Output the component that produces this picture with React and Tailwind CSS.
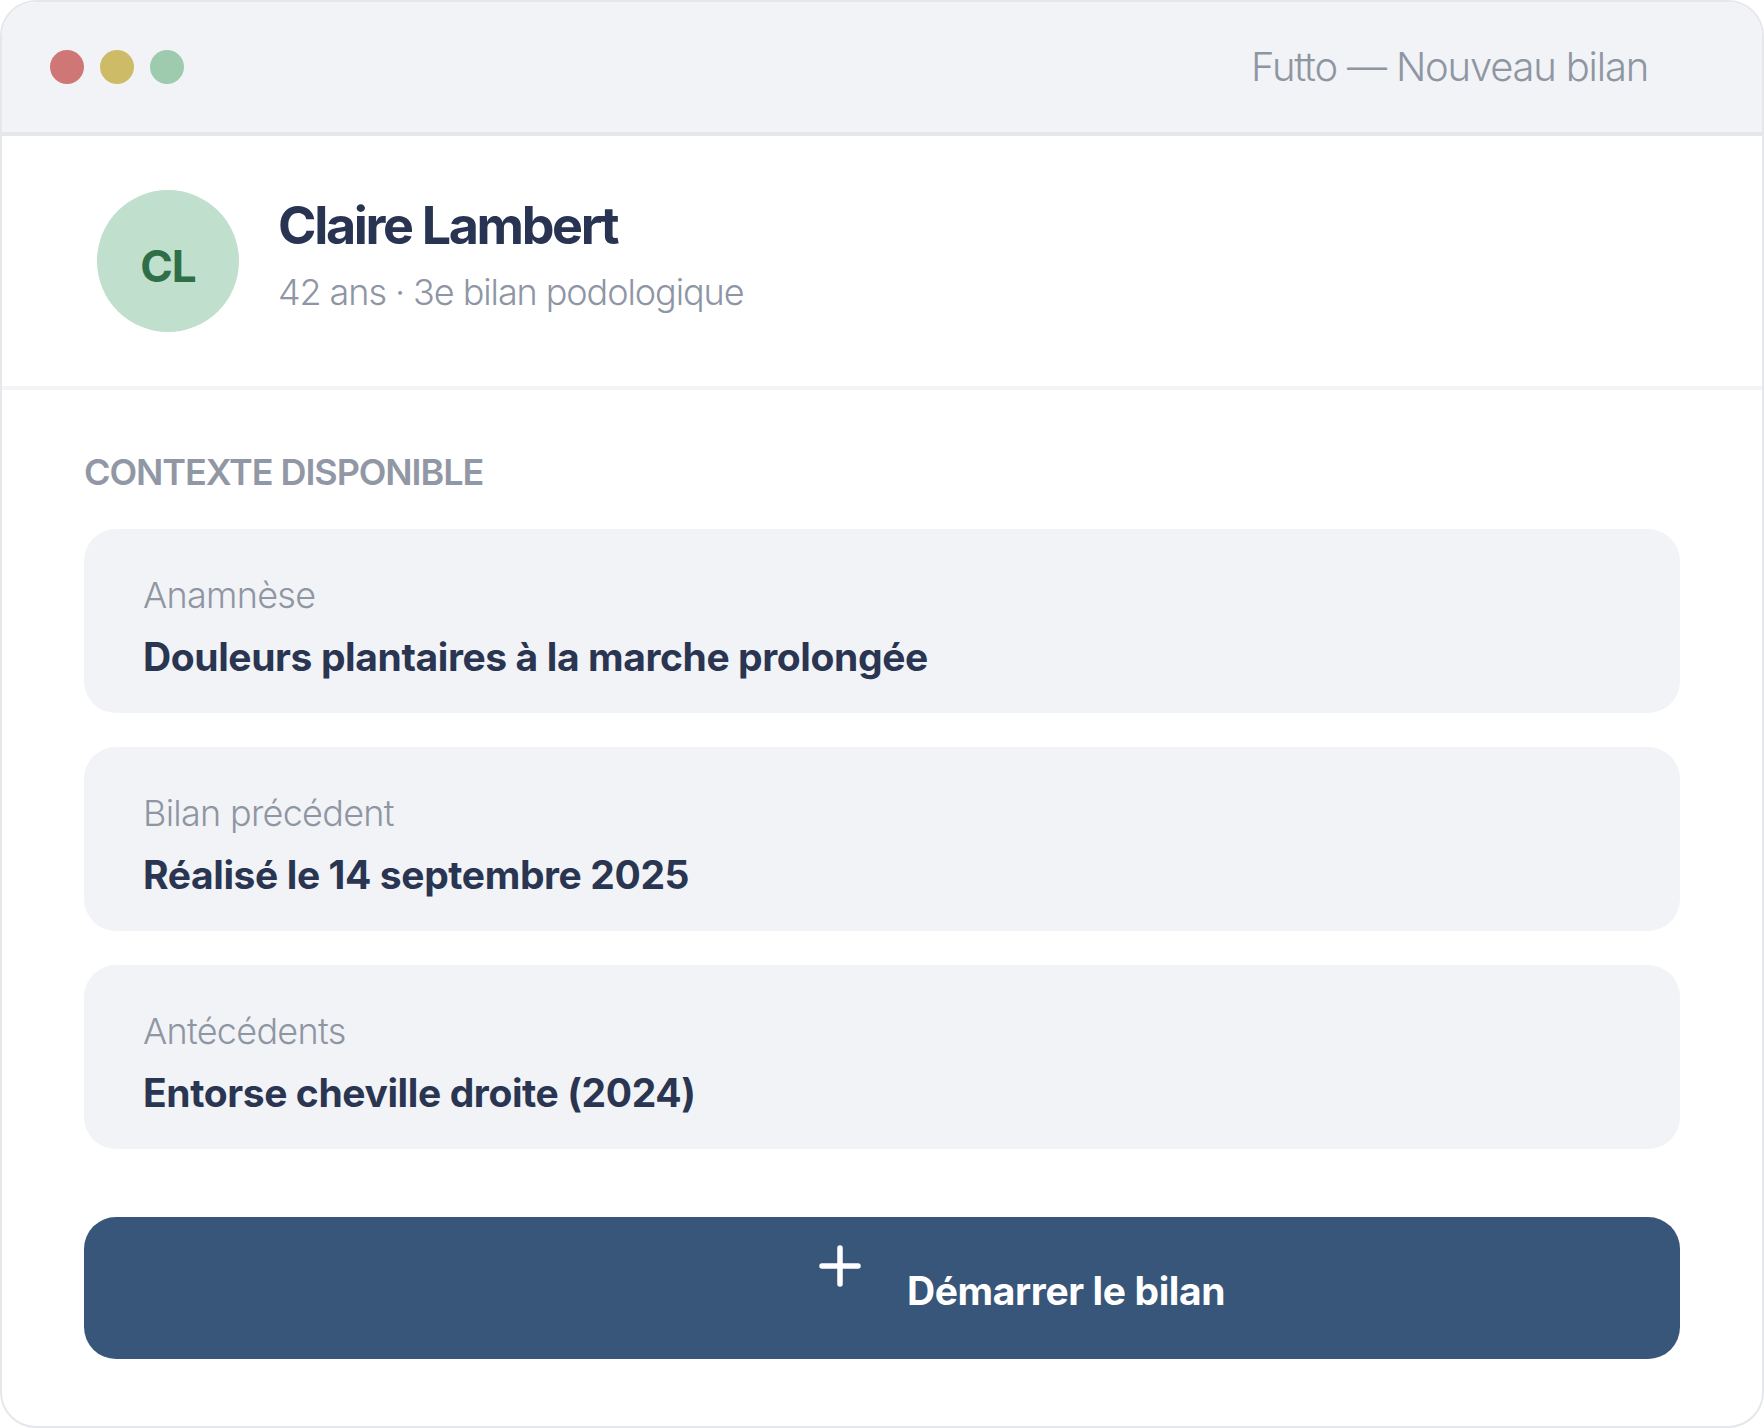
import React from "react";

const font = { fontFamily: "Inter, 'Noto Sans', sans-serif" };

function ContextCard({ label, value }) {
  return (
    <div className="flex flex-col gap-[16px] rounded-[32px] bg-[#f2f3f6] pl-[59px] pr-[40px] pt-[44px] pb-[33px]">
      <div className="text-[36px] leading-[45px] font-light tracking-[-0.02em] text-[#8f96a3]">
        {label}
      </div>
      <div className="text-[39px] leading-[46px] font-bold tracking-[-0.01em] text-[#2a3552]">
        {value}
      </div>
    </div>
  );
}

export default function App() {
  return (
    <div
      style={font}
      className="w-[1764px] h-[1428px] overflow-hidden rounded-[36px] border-2 border-[#e6e7ea] bg-white flex flex-col"
    >
      {/* Title bar */}
      <div className="h-[134px] shrink-0 flex items-center justify-between bg-[#f2f3f6] border-b-4 border-[#e6e7e9] pl-[48px] pr-[114px]">
        <div className="flex items-center gap-[16px]">
          <span className="w-[34px] h-[34px] rounded-full bg-[#cf7676]" />
          <span className="w-[34px] h-[34px] rounded-full bg-[#cdbb68]" />
          <span className="w-[34px] h-[34px] rounded-full bg-[#9ecbae]" />
        </div>
        <div className="text-[40px] font-light tracking-[-0.03em] text-[#8f96a3]">
          Futto — Nouveau bilan
        </div>
      </div>

      {/* Patient header */}
      <div className="h-[254px] shrink-0 flex items-center gap-[39px] pl-[95px] border-b-4 border-[#f3f4f6]">
        <div className="w-[142px] h-[142px] rounded-full bg-[#c0dfcc] flex items-center justify-center">
          <span className="mt-[10px] text-[44px] font-bold tracking-[-0.02em] text-[#2f6e47]">CL</span>
        </div>
        <div className="flex flex-col gap-[13px] pb-[13px]">
          <div className="text-[52px] leading-[62px] font-bold tracking-[-0.045em] text-[#283452]">
            Claire Lambert
          </div>
          <div className="text-[36px] leading-[44px] font-light tracking-[-0.03em] text-[#8e95a4]">
            42 ans · 3e bilan podologique
          </div>
        </div>
      </div>

      {/* Context */}
      <div className="flex flex-col px-[82px] pt-[60px]">
        <div className="text-[36px] leading-[45px] font-semibold uppercase tracking-[-0.03em] text-[#9197a4]">
          Contexte disponible
        </div>
        <div className="mt-[34px] flex flex-col gap-[34px]">
          <ContextCard label="Anamnèse" value="Douleurs plantaires à la marche prolongée" />
          <ContextCard label="Bilan précédent" value="Réalisé le 14 septembre 2025" />
          <ContextCard label="Antécédents" value="Entorse cheville droite (2024)" />
        </div>

        <button className="mt-[68px] h-[142px] w-full rounded-[32px] bg-[#38557a] flex items-center pl-[735px]">
          <svg
            width="42"
            height="42"
            viewBox="0 0 42 42"
            className="mb-[44px] shrink-0"
            fill="none"
            stroke="white"
            strokeWidth="5.5"
            strokeLinecap="round"
          >
            <path d="M21 3v36M3 21h36" />
          </svg>
          <span className="ml-[46px] mt-[6px] text-[39px] leading-[46px] font-bold tracking-[-0.01em] text-white">
            Démarrer le bilan
          </span>
        </button>
      </div>
    </div>
  );
}
